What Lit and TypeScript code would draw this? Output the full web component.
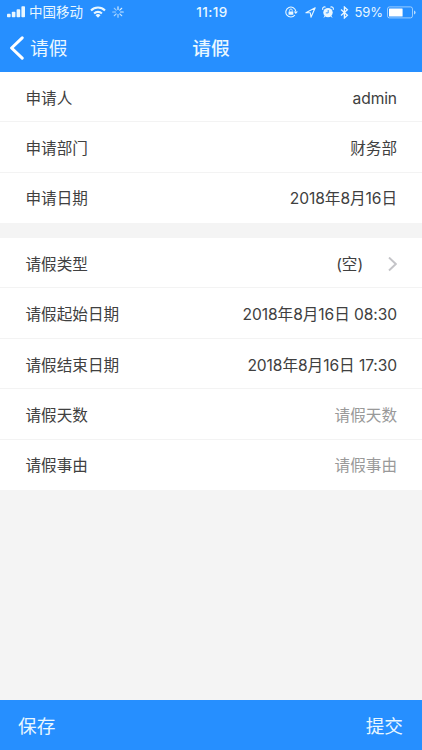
import { LitElement, html, css, svg } from "lit";
import { customElement, property } from "lit/decorators.js";

interface Field {
  label: string;
  value: string;
  hint?: boolean;
  arrow?: boolean;
}

const applicant: Field[] = [
  { label: "申请人", value: "admin" },
  { label: "申请部门", value: "财务部" },
  { label: "申请日期", value: "2018年8月16日" },
];

const leave: Field[] = [
  { label: "请假类型", value: "(空)", arrow: true },
  { label: "请假起始日期", value: "2018年8月16日 08:30" },
  { label: "请假结束日期", value: "2018年8月16日 17:30" },
  { label: "请假天数", value: "请假天数", hint: true },
  { label: "请假事由", value: "请假事由", hint: true },
];

@customElement("status-bar")
class StatusBar extends LitElement {
  static styles = css`
    :host {
      display: flex;
      height: 24px;
      align-items: center;
      color: #e9f7ff;
      font: 13px/24px Inter, "Noto Sans CJK SC", sans-serif;
    }
    svg { display: block; flex: none; fill: currentColor; }
    .side { flex: 1 1 0; display: flex; align-items: center; height: 24px; }
    .left { padding-left: 7px; }
    .right { justify-content: flex-end; padding-right: 6px; }
    .carrier { margin-left: 4px; font-size: 13.5px; }
    .wifi { margin-left: 7px; }
    .spin { margin-left: 6px; }
    .time { padding-left: 1px; font-weight: 500; font-size: 13.5px; letter-spacing: 0.4px; }
    .loc { margin-left: 7px; }
    .alarm { margin-left: 6px; }
    .bt { margin-left: 6px; }
    .pct { margin-left: 6px; font-size: 13px; letter-spacing: -0.1px; }
    .battery { margin-left: 4px; }
  `;
  render() {
    const rays = [0, 45, 90, 135, 180, 225, 270, 315];
    return html`
      <div class="side left">
        <svg width="18" height="12" viewBox="0 0 18 12">
          <rect x="0" y="7.7" width="3.6" height="3.6" rx=".8" />
          <rect x="4.8" y="5.8" width="3.6" height="5.5" rx=".8" />
          <rect x="9.6" y="3.2" width="3.6" height="8.1" rx=".8" />
          <rect x="14.4" y="0.2" width="3.6" height="11.1" rx=".8" />
        </svg>
        <span class="carrier">中国移动</span>
        <svg class="wifi" width="16" height="12" viewBox="0 0 16 12">
          <path d="M8 11.8 5.5 9.2a3.6 3.6 0 0 1 5 0z" />
          <path d="M4.1 7.5a5.6 5.6 0 0 1 7.8 0M1 4.4a10 10 0 0 1 14 0" fill="none" stroke="currentColor" stroke-width="2.1" />
        </svg>
        <svg class="spin" width="12" height="12" viewBox="0 0 12 12">
          ${rays.map((a, i) => svg`<path d="M6 .7v2.8" transform="rotate(${a} 6 6)" stroke="currentColor" stroke-width="1.1" stroke-linecap="round" opacity=${1 - i * 0.06} />`)}
        </svg>
      </div>
      <span class="time">11:19</span>
      <div class="side right">
        <svg width="13" height="12" viewBox="0 0 13 12">
          <path d="M9.9 9A5 5 0 1 1 10.8 5.4" fill="none" stroke="currentColor" stroke-width="1.1" />
          <path d="M8.7 5.4h4.2L10.8 8z" />
          <rect x="3.5" y="5.4" width="4.8" height="3.4" rx=".4" />
          <path d="M4.6 5.5V4.3a1.3 1.3 0 0 1 2.6 0v1.2" fill="none" stroke="currentColor" stroke-width=".9" />
        </svg>
        <svg class="loc" width="11" height="11" viewBox="0 0 11 11">
          <path d="M.9 5.8 10.2.8 6 10.2 5.3 5.8z" fill="none" stroke="currentColor" stroke-width="1.1" stroke-linejoin="round" />
        </svg>
        <svg class="alarm" width="12" height="12" viewBox="0 0 12 12">
          <circle cx="6" cy="6.6" r="4.7" />
          <path d="M.7 3.4A2 2 0 0 1 3.2 1M11.3 3.4A2 2 0 0 0 8.8 1" fill="none" stroke="currentColor" stroke-width="1.1" stroke-linecap="round" />
          <path d="M2.9 10.2 2.2 11.2M9.1 10.2l.7 1" stroke="currentColor" stroke-width="1" stroke-linecap="round" />
          <path d="M6.2 4v2.9H3.8" fill="none" stroke="#268fff" stroke-width=".9" />
        </svg>
        <svg class="bt" width="9" height="13" viewBox="0 0 9 13">
          <path d="M1 3.6 7.4 9.2 4.4 12V1L7.4 3.8 1 9.4" fill="none" stroke="currentColor" stroke-width="1.3" />
        </svg>
        <span class="pct">59%</span>
        <svg class="battery" width="29" height="13" viewBox="0 0 29 13">
          <rect x=".5" y=".9" width="25" height="11" rx="2" fill="none" stroke="currentColor" stroke-width=".8" opacity=".75" />
          <rect x="2" y="2.4" width="13.6" height="8" rx=".5" fill="#fff" />
          <path d="M27 4.4q1.6.4 1.6 2t-1.6 2z" opacity=".75" />
        </svg>
      </div>
    `;
  }
}

@customElement("form-row")
class FormRow extends LitElement {
  @property({ attribute: false }) field!: Field;
  static styles = css`
    :host {
      display: flex;
      flex: 1 1 0;
      box-sizing: border-box;
      align-items: center;
      justify-content: space-between;
      padding: 4px 25px 0 25.5px;
      border-bottom: 1px solid #f3f3f3;
      background: #fff;
      color: #404040;
      font: 15.6px/24px Inter, "Noto Sans CJK SC", sans-serif;
    }
    :host(:last-child) { border-bottom-color: transparent; }
    .value { display: flex; align-items: center; white-space: pre; }
    .latin { letter-spacing: -0.1px; }
    .hint { color: #999; }
    .arrow { display: block; margin-left: 25px; }
  `;
  render() {
    const { label, value, hint, arrow } = this.field;
    const runs = value.match(/[\x20-\x7e]+|[^\x20-\x7e]+/g) ?? [];
    return html`
      <span>${label}</span>
      <span class="value ${hint ? "hint" : ""}"
        >${runs.map((r) => html`<span class=${/^[\x20-\x7e]/.test(r) ? "latin" : ""}>${r}</span>`)}${arrow
          ? html`<svg class="arrow" width="9" height="16" viewBox="0 0 9 16">
              <path d="M1 .5 7.8 7 1 13.5" fill="none" stroke="#c4c4c8" stroke-width="1.9" />
            </svg>`
          : null}</span>
    `;
  }
}

@customElement("app-root")
class AppRoot extends LitElement {
  static styles = css`
    :host {
      display: flex;
      flex-direction: column;
      height: 750px;
      background: #f4f4f4;
      font-family: Inter, "Noto Sans CJK SC", sans-serif;
    }
    header { height: 72px; flex: none; background: #268fff; color: #e9f7ff; }
    nav { display: grid; grid-template-columns: 1fr auto 1fr; height: 48px; align-items: center; font-size: 18.7px; line-height: 28px; }
    nav span { padding-top: 1px; }
    .back { display: flex; align-items: center; padding-left: 9px; }
    .back svg { display: block; margin-right: 6px; }
    .title { font-weight: 500; }
    .group { display: flex; flex-direction: column; flex: none; background: #fff; }
    .first { height: 151px; margin-bottom: 15px; }
    .second { height: 252px; }
    footer {
      display: flex;
      justify-content: space-between;
      align-items: center;
      box-sizing: border-box;
      height: 50px;
      margin-top: auto;
      padding: 3px 19px 0 18px;
      background: #268fff;
      color: #e9f7ff;
      font-size: 18.7px;
      line-height: 28px;
    }
  `;
  render() {
    return html`
      <header>
        <status-bar></status-bar>
        <nav>
          <div class="back">
            <svg width="15" height="24" viewBox="0 0 15 24">
              <path d="M13.2 1.8 2.6 12l10.6 10.2" fill="none" stroke="#fff" stroke-width="3" stroke-linecap="round" stroke-linejoin="round" />
            </svg>
            <span>请假</span>
          </div>
          <span class="title">请假</span>
        </nav>
      </header>
      <section class="group first">${applicant.map((f) => html`<form-row .field=${f}></form-row>`)}</section>
      <section class="group second">${leave.map((f) => html`<form-row .field=${f}></form-row>`)}</section>
      <footer><span>保存</span><span>提交</span></footer>
    `;
  }
}
